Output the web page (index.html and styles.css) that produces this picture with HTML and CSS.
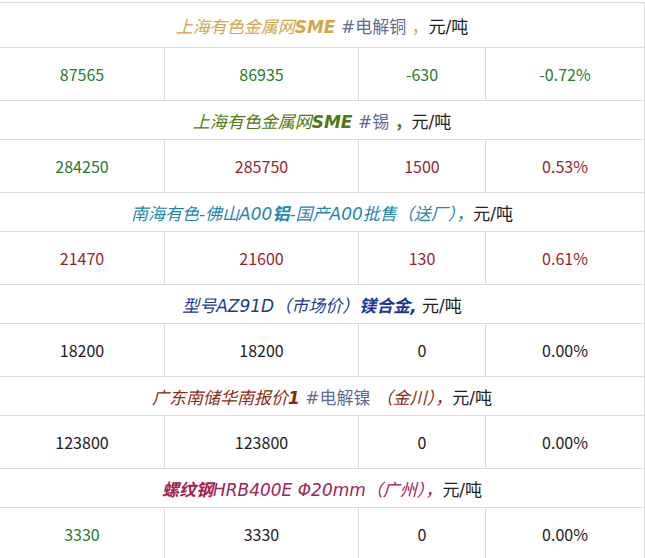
FILE: index.html
```html
<!DOCTYPE html>
<html lang="zh-CN">
<head>
<meta charset="utf-8">
<title>有色金属报价</title>
<link rel="stylesheet" href="styles.css">
</head>
<body>
<div class="board">
  <div class="head first"><span class="t"><span class="i gold">上海有色金属网<b>SME</b></span> <span class="tag">#电解铜</span> <span class="gold">，</span>元/吨</span></div>
  <div class="row">
    <div class="cell up">87565</div><div class="cell up">86935</div><div class="cell up">-630</div><div class="cell up">-0.72%</div>
  </div>

  <div class="head"><span class="t"><span class="i olive">上海有色金属网<b>SME</b></span> <span class="tag">#锡</span> <b class="olive">，</b>元/吨</span></div>
  <div class="row">
    <div class="cell up">284250</div><div class="cell down">285750</div><div class="cell down">1500</div><div class="cell down">0.53%</div>
  </div>

  <div class="head"><span class="t"><span class="i teal">南海有色-佛山A00<b>铝</b>-国产A00批售（送厂），</span>元/吨</span></div>
  <div class="row">
    <div class="cell down">21470</div><div class="cell down">21600</div><div class="cell down">130</div><div class="cell down">0.61%</div>
  </div>

  <div class="head"><span class="t"><span class="i navy">型号AZ91D（市场价）<b>镁合金,</b></span> 元/吨</span></div>
  <div class="row">
    <div class="cell">18200</div><div class="cell">18200</div><div class="cell">0</div><div class="cell">0.00%</div>
  </div>

  <div class="head"><span class="t"><span class="i brown">广东南储华南报价<b>1</b></span> <span class="tag">#电解镍</span> <span class="i brown">（金川），</span>元/吨</span></div>
  <div class="row">
    <div class="cell">123800</div><div class="cell">123800</div><div class="cell">0</div><div class="cell">0.00%</div>
  </div>

  <div class="head"><span class="t"><span class="i crimson"><b>螺纹钢</b>HRB400E Φ20mm（广州），</span>元/吨</span></div>
  <div class="row">
    <div class="cell up">3330</div><div class="cell">3330</div><div class="cell">0</div><div class="cell">0.00%</div>
  </div>
</div>
</body>
</html>
```

FILE: styles.css
```css
html, body {
  margin: 0;
  padding: 0;
  background: #fff;
}
body {
  font-family: "Noto Sans CJK SC", "Noto Sans", sans-serif;
  font-size: 16px;
  color: #222;
}
.board {
  width: 645px;
  margin-top: 2px;
  border-top: 1px solid #dcdcdc;
  box-sizing: border-box;
}
.head {
  height: 38px;
  border-bottom: 1px solid #dcdcdc;
  border-right: 1px solid #dcdcdc;
  display: flex;
  align-items: center;
  justify-content: center;
  color: #222;
  font-family: "DejaVu Sans", "Noto Sans CJK SC", sans-serif;
  font-size: 17px;
}
.head.first {
  height: 44px;
}
.t {
  white-space: pre;
}
.head b {
  font-weight: 700;
}
.i {
  font-style: italic;
}
.tag {
  color: #5d6b8e;
}
.gold { color: #d3a64a; }
.olive { color: #4f7a12; }
.teal { color: #1d86ad; }
.navy { color: #1b3a96; }
.brown { color: #8a2a12; }
.crimson { color: #a3234f; }
.row {
  display: grid;
  grid-template-columns: 165px 194px 127px 159px;
  height: 53px;
}
.cell {
  border-right: 1px solid #dcdcdc;
  border-bottom: 1px solid #dcdcdc;
  display: flex;
  align-items: center;
  justify-content: center;
  color: #222;
}
.cell.up { color: #2a7a2a; }
.cell.down { color: #9a1f2c; }
```
